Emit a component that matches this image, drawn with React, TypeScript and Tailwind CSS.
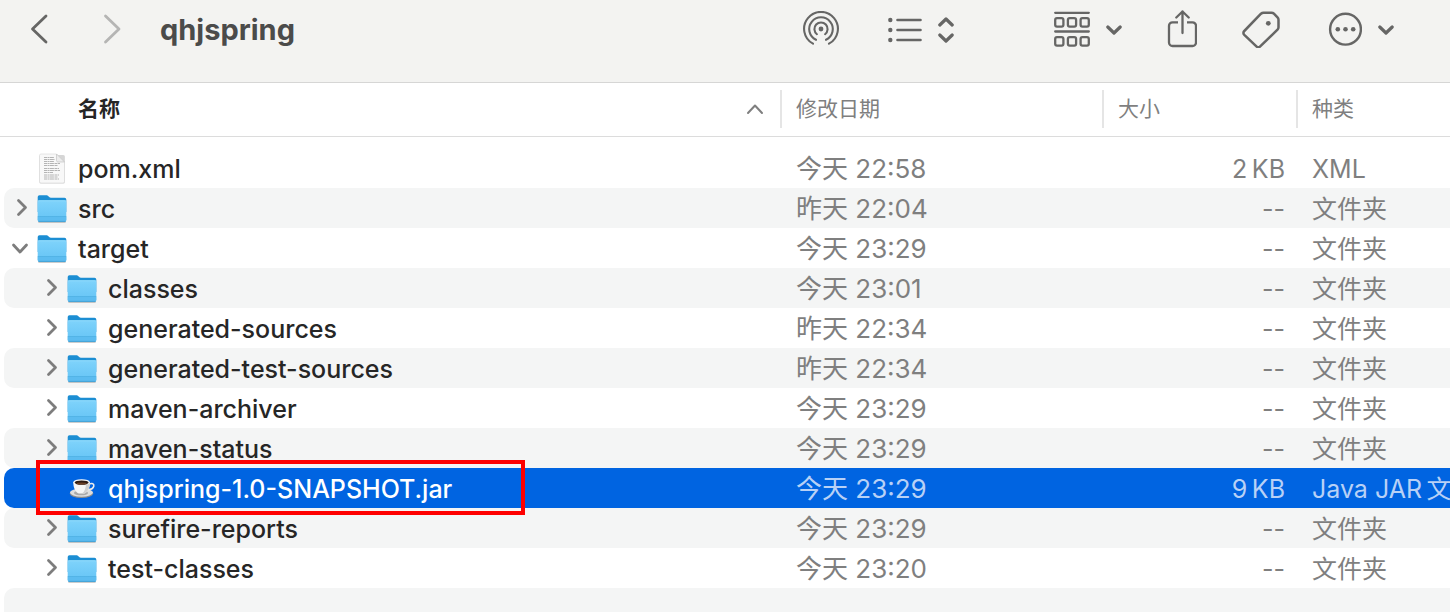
import type { ReactNode } from "react";

type FileKind = "folder" | "document" | "jar";

type FileRow = {
  name: string;
  icon: FileKind;
  modified: string;
  size: string;
  kind: string;
  depth?: 0 | 1;
  expanded?: boolean;
  selected?: boolean;
};

// Sizes and mixed-script kinds use a thin space, as Finder does.
const rows: FileRow[] = [
  { name: "pom.xml", icon: "document", modified: "今天 22:58", size: "2\u2009KB", kind: "XML" },
  { name: "src", icon: "folder", modified: "昨天 22:04", size: "--", kind: "文件夹" },
  { name: "target", icon: "folder", modified: "今天 23:29", size: "--", kind: "文件夹", expanded: true },
  { name: "classes", icon: "folder", modified: "今天 23:01", size: "--", kind: "文件夹", depth: 1 },
  { name: "generated-sources", icon: "folder", modified: "昨天 22:34", size: "--", kind: "文件夹", depth: 1 },
  { name: "generated-test-sources", icon: "folder", modified: "昨天 22:34", size: "--", kind: "文件夹", depth: 1 },
  { name: "maven-archiver", icon: "folder", modified: "今天 23:29", size: "--", kind: "文件夹", depth: 1 },
  { name: "maven-status", icon: "folder", modified: "今天 23:29", size: "--", kind: "文件夹", depth: 1 },
  {
    name: "qhjspring-1.0-SNAPSHOT.jar",
    icon: "jar",
    modified: "今天 23:29",
    size: "9\u2009KB",
    kind: "Java JAR\u2009文件",
    depth: 1,
    selected: true,
  },
  { name: "surefire-reports", icon: "folder", modified: "今天 23:29", size: "--", kind: "文件夹", depth: 1 },
  { name: "test-classes", icon: "folder", modified: "今天 23:20", size: "--", kind: "文件夹", depth: 1 },
];

const FolderIcon = () => (
  <svg viewBox="0 0 32 32" className="size-8 shrink-0" aria-hidden="true">
    <defs>
      <linearGradient id="folder-front" x1="0" y1="0" x2="0" y2="1">
        <stop offset="0" stopColor="#7fd3fb" />
        <stop offset="1" stopColor="#64c3f5" />
      </linearGradient>
    </defs>
    <rect x="2" y="28" width="28" height="3" rx="1.5" fill="#000" opacity="0.2" />
    <path
      d="M1.7 5A1.8 1.8 0 0 1 3.5 3.2H10c1.2 0 1.7.3 2.4 1l.8.8c.5.5 1 .7 1.8.7h13.5a1.8 1.8 0 0 1 1.8 1.8V20H1.7z"
      fill="#1c8ed3"
    />
    <path
      d="M1.7 10A1.8 1.8 0 0 1 3.5 8.2h25A1.8 1.8 0 0 1 30.3 10v18a1.8 1.8 0 0 1-1.8 1.8h-25A1.8 1.8 0 0 1 1.7 28z"
      fill="url(#folder-front)"
    />
    <path d="M2 8.8h28" stroke="#9adffd" strokeWidth="0.8" />
    <path d="M1.7 25h28.6v3a1.8 1.8 0 0 1-1.8 1.8h-25A1.8 1.8 0 0 1 1.7 28z" fill="#5cbcf0" />
    <path d="M1.7 24.5h28.6" stroke="#4caee2" strokeWidth="0.8" />
    <path d="M2.5 29.4h27" stroke="#3f9ed2" strokeWidth="0.9" />
  </svg>
);

const DocumentIcon = () => (
  <svg viewBox="0 0 32 32" className="size-8 shrink-0" aria-hidden="true">
    <rect x="3.3" y="3" width="25.6" height="28.5" rx="1.5" fill="#000" opacity="0.16" />
    <path
      d="M3.5 3.5A1.5 1.5 0 0 1 5 2h15.5l8 8v19.5A1.5 1.5 0 0 1 27 31H5a1.5 1.5 0 0 1-1.5-1.5z"
      fill="#f8f8f8"
      stroke="#d6d6d6"
      strokeWidth="0.6"
    />
    <g stroke="#b4b4b4" strokeWidth="1" strokeDasharray="3 .5 2 .4 4 .6">
      <path d="M8 5.5h10M8 7.5h11M8 9.5h10M8 11.5h16M8 13.5h14" />
      <path d="M8 16.5h15M8 18.5h16M8 20.5h9" />
      <path d="M8 23h15M8 25h14M8 27h15" />
    </g>
    <path d="M20.5 2v6.5A1.5 1.5 0 0 0 22 10h6.5z" fill="#ececec" stroke="#c4c4c4" strokeWidth="0.7" />
  </svg>
);

const JarIcon = () => (
  <svg viewBox="0 0 32 32" className="size-8 shrink-0" aria-hidden="true">
    <ellipse cx="15.5" cy="21.500" rx="11.7" ry="4.6" fill="#8d8d8d" />
    <ellipse cx="15.5" cy="20.600" rx="11.5" ry="4.2" fill="#dedede" />
    <ellipse cx="15" cy="21" rx="7" ry="2.3" fill="#a9a9a9" />
    <path d="M23 12c3.2-1 5.200-.3 4.800 2-.4 2-2.8 3.6-6 3.6" fill="none" stroke="#ececec" strokeWidth="1.6" />
    <path d="M7.3 10.5c0 5.5 2.5 10 5.5 11h5.4c3-1 5.8-5.500 5.8-11z" fill="#f6f6f6" />
    <path d="M20 11c0 5-1.5 9-4 10.500h2.200c3-1 5.8-5.500 5.8-10.500z" fill="#d2d2d2" />
    <ellipse cx="15.6" cy="10.2" rx="8.3" ry="3" fill="#fafafa" />
    <ellipse cx="15.6" cy="10.6" rx="7" ry="2.200" fill="#2c1b13" />
    <ellipse cx="15.6" cy="11.4" rx="5" ry="1" fill="#6b4026" />
  </svg>
);

const icons: Record<FileKind, () => ReactNode> = {
  folder: FolderIcon,
  document: DocumentIcon,
  jar: JarIcon,
};

const Disclosure = ({ name, expanded }: { name: string; expanded?: boolean }) => (
  <button type="button" aria-label={name} aria-expanded={Boolean(expanded)} className="size-6 shrink-0">
    <svg
      viewBox="0 0 24 24"
      className="size-6"
      fill="none"
      stroke="#7d7d7d"
      strokeWidth="2.8"
      strokeLinecap="round"
      strokeLinejoin="round"
    >
      <path d={expanded ? "M5.5 9l6.5 7 6.5-7" : "M10.5 4.5l7 7-7 7"} />
    </svg>
  </button>
);

const ToolbarButton = ({
  label,
  className = "",
  disabled,
  children,
}: {
  label: string;
  className?: string;
  disabled?: boolean;
  children: ReactNode;
}) => (
  <button
    type="button"
    aria-label={label}
    disabled={disabled}
    className={`flex shrink-0 items-center gap-4 text-[#666665] disabled:text-[#b5b5b4] ${className}`}
  >
    {children}
  </button>
);

const strokeProps = {
  fill: "none",
  stroke: "currentColor",
  strokeLinecap: "round",
  strokeLinejoin: "round",
} as const;

const SmallChevron = () => (
  <svg viewBox="0 0 16 12" className="h-3 w-4" {...strokeProps} strokeWidth="3.2">
    <path d="M1.8 4l6.2 6 6.2-6" />
  </svg>
);

const Toolbar = () => (
  <header className="h-[83px] border-b border-[#d6d6d5] bg-[#f3f3f1] pr-14 pl-[30px]">
    <div className="flex h-[58px] items-center">
      <ToolbarButton label="后退">
        <svg viewBox="0 0 18 30" className="h-[30px] w-[18px]" {...strokeProps} strokeWidth="2.8">
          <path d="M16 2L2.5 15 16 28" />
        </svg>
      </ToolbarButton>
      <ToolbarButton label="前进" disabled className="ml-[55px]">
        <svg viewBox="0 0 18 30" className="h-[30px] w-[18px]" {...strokeProps} strokeWidth="2.8">
          <path d="M2.5 2L16 15 2.5 28" />
        </svg>
      </ToolbarButton>
      <h1 className="ml-[39px] pt-0.5 text-[29px] leading-10 font-bold text-[#4b4b4a]">qhjspring</h1>

      <div className="ml-auto flex items-center gap-[45px]">
        <ToolbarButton label="隔空投送" className="mr-1">
          <svg viewBox="0 0 36 36" className="size-9" {...strokeProps} strokeWidth="2.1">
            <circle cx="18" cy="18" r="2.4" fill="currentColor" stroke="none" />
            <path d="M13.900 23.200a6.600 6.600 0 1 1 8.200 0" />
            <path d="M13 28.800a11.800 11.800 0 1 1 10 0" transform="translate(0 0)" />
            <path d="M10 32.700a16.900 16.900 0 1 1 16 0" />
          </svg>
        </ToolbarButton>
        <ToolbarButton label="列表显示" className="mr-[55px]">
          <svg viewBox="0 0 34 28" className="h-7 w-[34px]" {...strokeProps} strokeWidth="2.6">
            <path d="M9.5 5h23M9.5 15h23M9.5 25h23" />
            <g fill="currentColor" stroke="none">
              <circle cx="2.3" cy="5" r="2.2" />
              <circle cx="2.3" cy="15" r="2.2" />
              <circle cx="2.3" cy="25" r="2.2" />
            </g>
          </svg>
          <svg viewBox="0 0 16 28" className="h-7 w-4" {...strokeProps} strokeWidth="3.2">
            <path d="M1.8 10L8 4l6.2 6M1.8 20l6.2 6 6.2-6" />
          </svg>
        </ToolbarButton>
        <ToolbarButton label="分组方式">
          <svg viewBox="0 0 36 36" className="size-9" {...strokeProps} strokeWidth="2.3">
            <path d="M1.2 1.8h33.6M1.2 20.5h33.6" />
            <rect x="1.2" y="7.2" width="8.2" height="8.4" rx="1.8" />
            <rect x="13.9" y="7.2" width="8.2" height="8.4" rx="1.8" />
            <rect x="26.6" y="7.2" width="8.2" height="8.4" rx="1.8" />
            <rect x="1.2" y="26.2" width="8.2" height="8.4" rx="1.8" />
            <rect x="13.9" y="26.2" width="8.2" height="8.4" rx="1.8" />
            <rect x="26.6" y="26.2" width="8.2" height="8.4" rx="1.8" />
          </svg>
          <SmallChevron />
        </ToolbarButton>
        <ToolbarButton label="共享">
          <svg viewBox="0 0 30 38" className="h-[38px] w-[30px]" {...strokeProps} strokeWidth="2.3">
            <path
              d="M11 12.3H5.5A3.5 3.5 0 0 0 2 15.800V32.500A3.500 3.500 0 0 0 5.500 36h20a3.500 3.500 0 0 0 3.500-3.500V15.800a3.500 3.500 0 0 0-3.500-3.500H20"
              strokeLinecap="butt"
            />
            <path d="M15.5 23V1.500M9.300 7.500l6.200-6 6.200 6" />
          </svg>
        </ToolbarButton>
        <ToolbarButton label="标签" className="mr-[3px]">
          <svg viewBox="0 0 38 38" className="size-[38px]" {...strokeProps} strokeWidth="2.5">
            <path d="M19 3.700c.8-.7 1.500-1 2.500-1h8c1 0 1.700.3 2.400 1l3.600 3.700c.7.700 1 1.300 1 2.300v7.500c0 1-.3 1.800-1 2.500L18.200 36.300c-1.200 1.200-2.600 1.200-3.800 0L2.300 24.800c-1.200-1.200-1.200-2.600 0-3.800z" />
            <circle cx="26.300" cy="13.300" r="2.400" fill="currentColor" stroke="none" />
          </svg>
        </ToolbarButton>
        <ToolbarButton label="更多">
          <svg viewBox="0 0 34 34" className="size-[34px]" {...strokeProps} strokeWidth="2.4">
            <circle cx="17.5" cy="17.2" r="15.4" />
            <g fill="currentColor" stroke="none">
              <circle cx="9.8" cy="17.3" r="2.3" />
              <circle cx="17.5" cy="17.3" r="2.3" />
              <circle cx="25.2" cy="17.3" r="2.3" />
            </g>
          </svg>
          <SmallChevron />
        </ToolbarButton>
      </div>
    </div>
  </header>
);

const HeaderCell = ({ children }: { children: ReactNode }) => (
  <th className="border-b border-[#dcdcdc] p-0 pb-0.5 text-left font-normal text-[#7f7f7f]">
    <div className="flex h-[38px] items-center border-l-2 border-[#e5e5e5] pl-[14px]">{children}</div>
  </th>
);

const FileTableRow = ({ row, striped }: { row: FileRow; striped: boolean }) => {
  const Icon = icons[row.icon];
  const background = row.selected ? "bg-[#0064e1]" : striped ? "bg-[#f4f5f5]" : "";
  const nameColor = row.selected ? "text-white" : "text-[#262626]";
  const detailColor = row.selected ? "text-[#b8d1f6]" : "text-[#7f7f7f]";

  return (
    <tr aria-selected={Boolean(row.selected)} className={detailColor}>
      <td className="p-0">
        <div
          className={`relative ml-1 flex h-10 items-center rounded-l-[10px] font-medium ${background} ${nameColor} ${
            row.depth ? "pl-[34px]" : "pl-1"
          }`}
        >
          {row.icon === "folder" ? (
            <Disclosure name={row.name} expanded={row.expanded} />
          ) : (
            <span className="w-6 shrink-0" />
          )}
          <span className="ml-1 flex items-center gap-[10px]">
            <Icon />
            <span className="pt-0.5">{row.name}</span>
          </span>
          {row.selected && (
            <span className="pointer-events-none absolute -top-2 left-8 z-10 h-[55px] w-[489px] border-4 border-[#fe0000]" />
          )}
        </div>
      </td>
      <td className={`p-0 pt-0.5 pl-4 text-[26px] leading-9 ${background}`}>{row.modified}</td>
      <td className={`p-0 pt-0.5 pr-[11px] text-right ${background}`}>{row.size}</td>
      <td className={`overflow-hidden p-0 pt-0.5 pl-4 ${background}`}>{row.kind}</td>
    </tr>
  );
};

export default function App() {
  return (
    <div className="h-screen overflow-hidden bg-white font-['Inter','Noto_Sans_CJK_SC',sans-serif]">
      <Toolbar />
      <table className="w-full table-fixed border-separate border-spacing-0 text-[25px] leading-9 whitespace-nowrap">
        <colgroup>
          <col />
          <col className="w-[322px]" />
          <col className="w-[194px]" />
          <col className="w-[154px]" />
        </colgroup>
        <thead className="text-[21px]">
          <tr className="h-[54px]">
            <th
              aria-sort="ascending"
              className="border-b border-[#dcdcdc] p-0 pb-0.5 text-left font-bold text-[#262626]"
            >
              <button type="button" className="flex w-full items-center justify-between pr-4 pl-[78px]">
                名称
                <svg
                  viewBox="0 0 18 12"
                  className="h-3 w-[18px]"
                  fill="none"
                  stroke="#7f7f7f"
                  strokeWidth="2"
                  strokeLinecap="round"
                  strokeLinejoin="round"
                >
                  <path d="M2 10l7-7.500 7 7.500" />
                </svg>
              </button>
            </th>
            <HeaderCell>修改日期</HeaderCell>
            <HeaderCell>大小</HeaderCell>
            <HeaderCell>种类</HeaderCell>
          </tr>
        </thead>
        <tbody className="before:block before:h-[11px]">
          {rows.map((row, index) => (
            <FileTableRow key={row.name} row={row} striped={index % 2 === 1} />
          ))}
          <tr aria-hidden="true">
            <td colSpan={4} className="p-0">
              <div className="ml-1 h-10 rounded-l-[10px] bg-[#f4f5f5]" />
            </td>
          </tr>
        </tbody>
      </table>
    </div>
  );
}
